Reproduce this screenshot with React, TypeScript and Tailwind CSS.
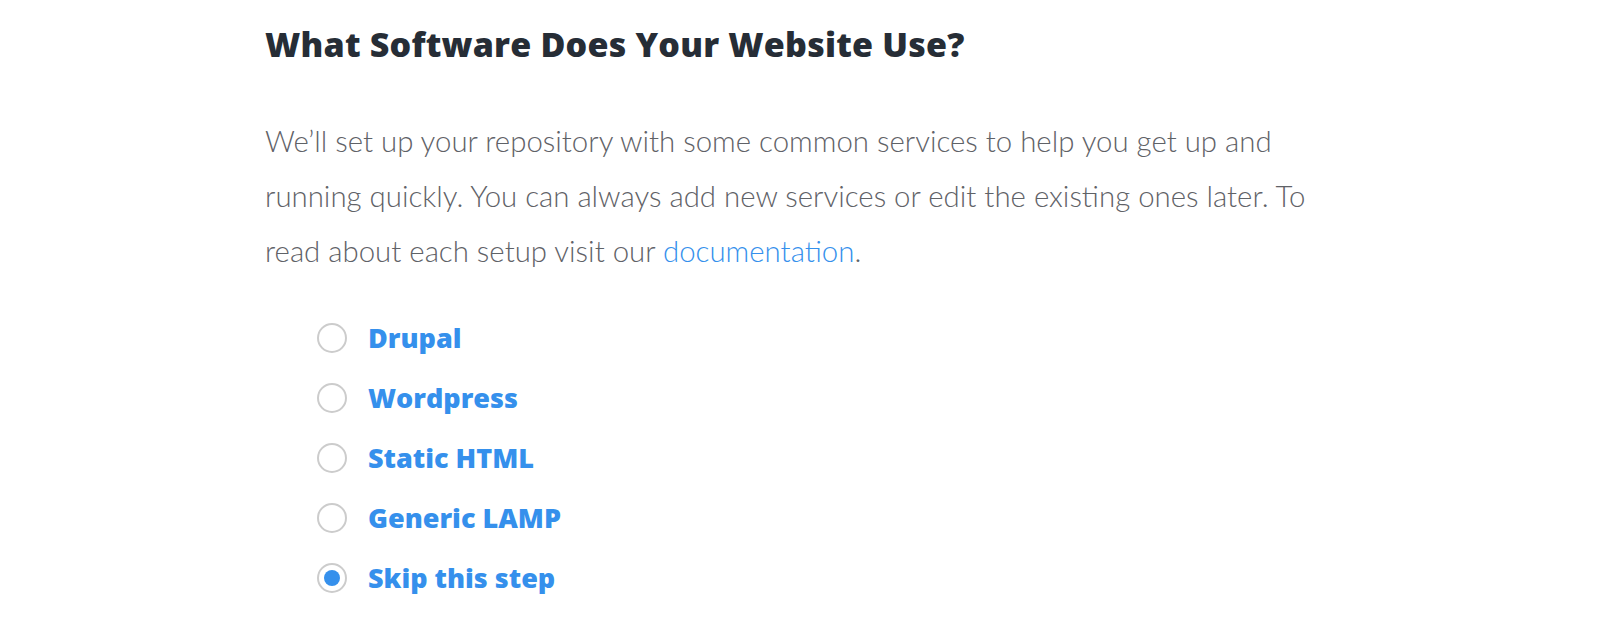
import React from "react";

const options = [
  { label: "Drupal", checked: false },
  { label: "Wordpress", checked: false },
  { label: "Static HTML", checked: false },
  { label: "Generic LAMP", checked: false },
  { label: "Skip this step", checked: true },
];

export default function App() {
  return (
    <div className="min-h-[630px] w-full bg-white font-['Lato','Liberation_Sans',sans-serif]">
      <div className="mx-auto w-[1070px] pt-[22px]">
        <h1 className="font-['Open_Sans','Liberation_Sans',sans-serif] text-[34px] leading-[44px] font-extrabold tracking-[0.2px] text-[#262d36]">
          What Software Does Your Website Use?
        </h1>
        <p className="mt-[47px] text-[29.4px] leading-[55px] font-light text-[#5f6267]">
          We’ll set up your repository with some common services to help you get up and
          <br />
          running quickly. You can always add new services or edit the existing ones later. To
          <br />
          read about each setup visit our{" "}
          <a href="#" className="text-[#3590ec]">
            documentation
          </a>
          .
        </p>
        <div className="mt-[45px] ml-[52px] flex flex-col gap-[30px]">
          {options.map((o) => (
            <label key={o.label} className="flex items-center gap-[21px] h-[30px]">
              <span className="flex h-[30px] w-[30px] items-center justify-center rounded-full border-2 border-[#cccccc] bg-white">
                {o.checked && <span className="h-[16px] w-[16px] rounded-full bg-[#3590ec]" />}
              </span>
              <span className="font-['Open_Sans','Liberation_Sans',sans-serif] text-[27px] font-extrabold text-[#3590ec] leading-[30px]">
                {o.label}
              </span>
            </label>
          ))}
        </div>
      </div>
    </div>
  );
}
